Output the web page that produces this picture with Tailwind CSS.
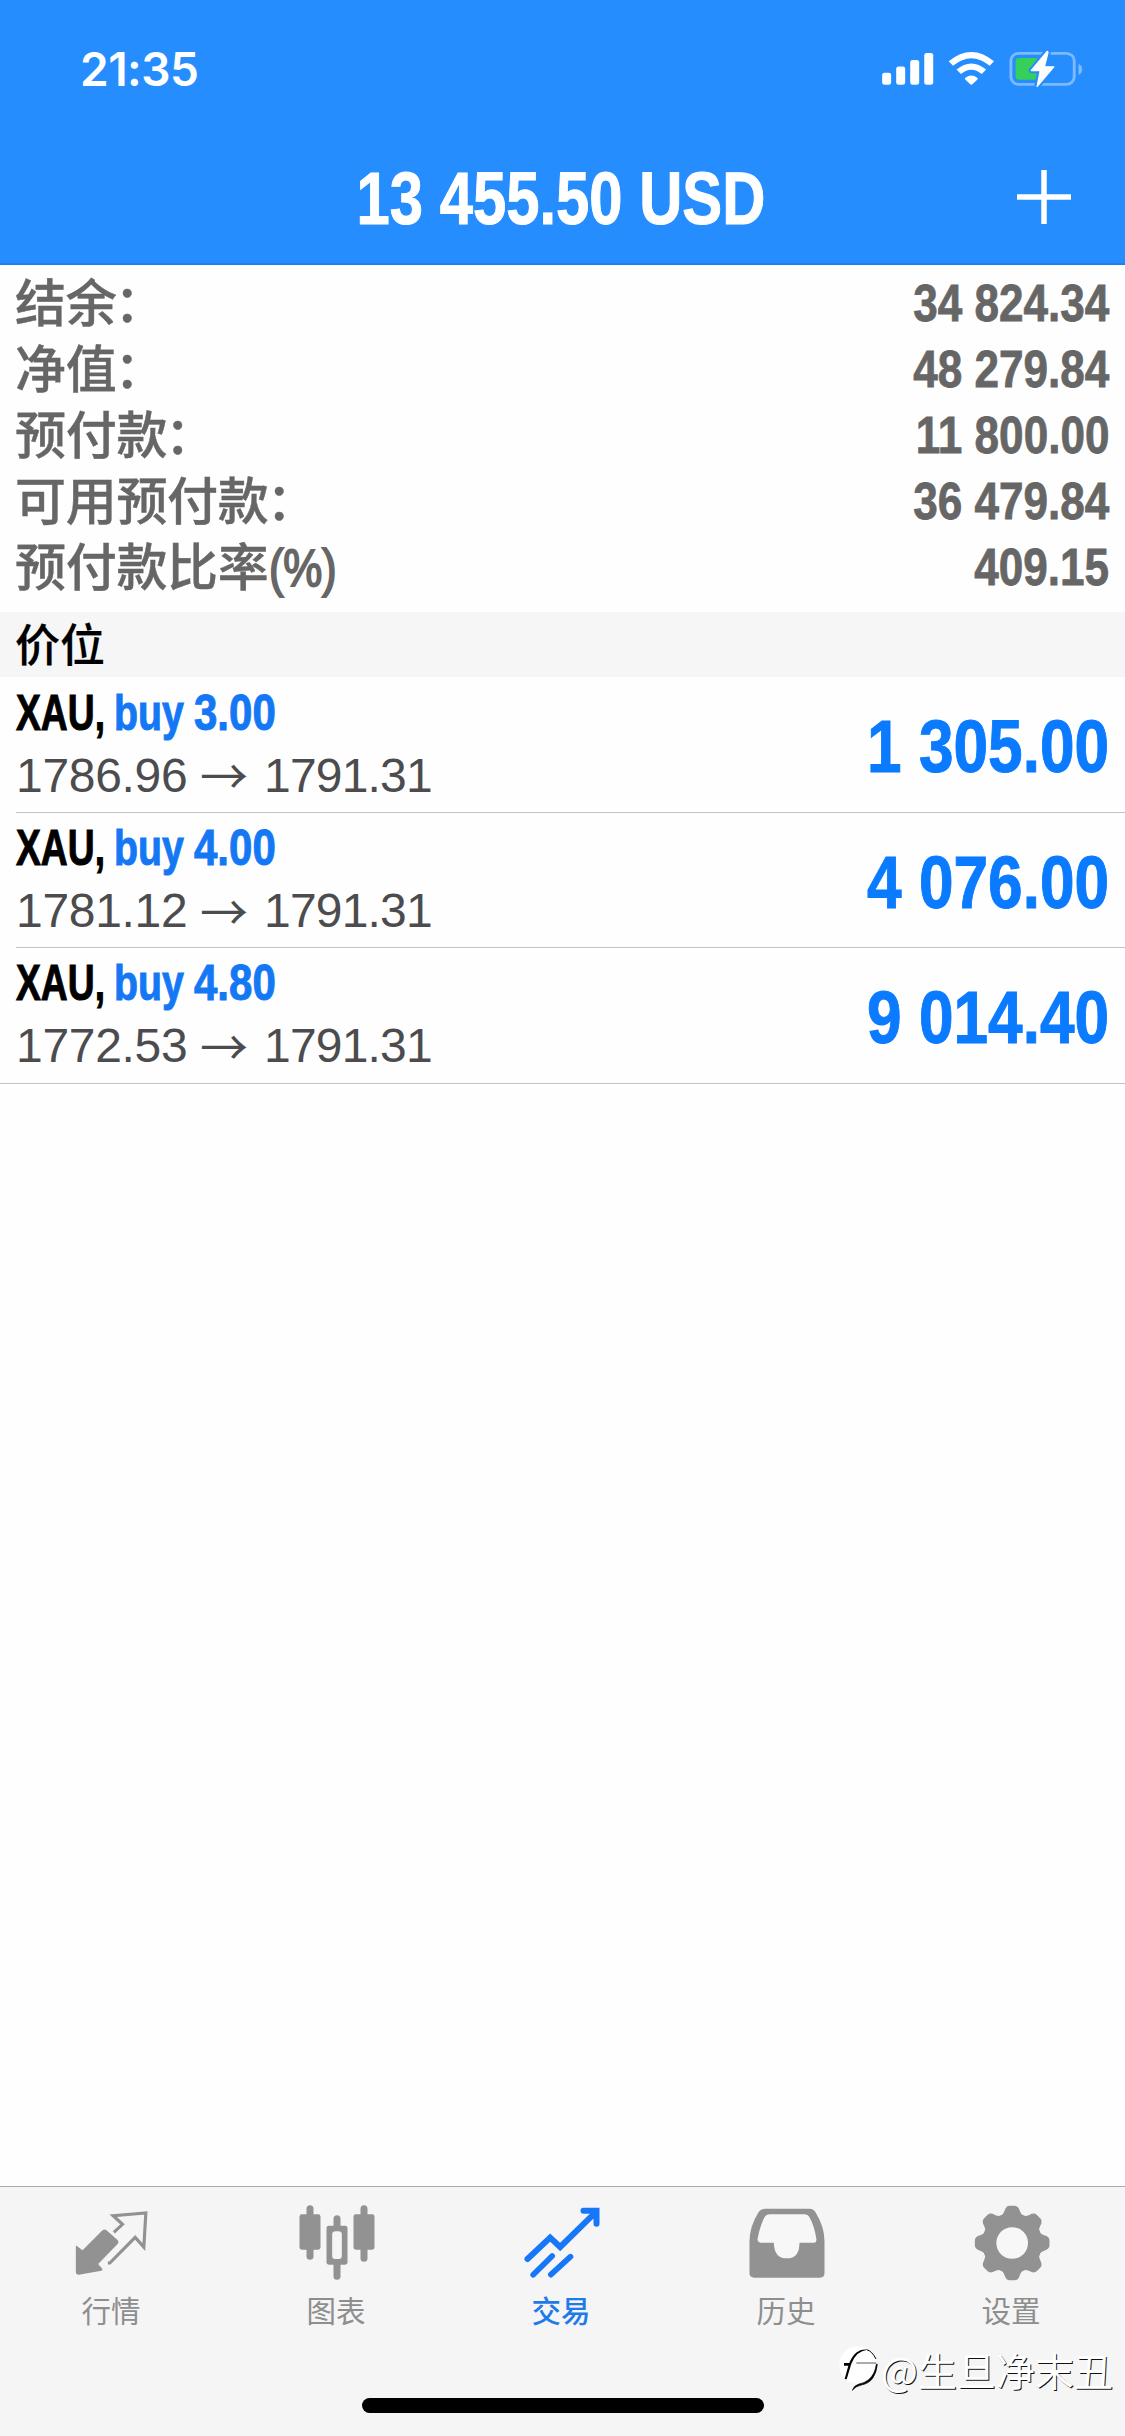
<!DOCTYPE html>
<html lang="zh-CN">
<head>
<meta charset="utf-8">
<title>交易</title>
<script src="https://cdn.jsdelivr.net/npm/@tailwindcss/browser@4"></script>
</head>
<body class="bg-white">
<div class="flex h-[2436px] w-[1125px] flex-col overflow-hidden bg-[#fefefe] font-['Liberation_Sans','Noto_Sans_CJK_SC',sans-serif]">

  <header class="h-[265px] shrink-0 border-b-2 border-[#1c80fb] bg-[#268dff] text-white">
    <div class="flex h-[132px] items-center justify-between pt-[6px] pr-[40px] pl-[80px]">
      <span class="font-['Inter',sans-serif] text-[46px] leading-none font-semibold tracking-[-0.5px]">21:35</span>
      <svg class="h-[38px] w-[205px]" viewBox="885 150 570 115" preserveAspectRatio="none">
        <g fill="#fff">
          <rect x="891" y="219" width="25" height="36" rx="7"/>
          <rect x="930" y="200" width="25" height="55" rx="7"/>
          <rect x="969" y="180" width="25" height="75" rx="7"/>
          <rect x="1008" y="159" width="25" height="96" rx="7"/>
          <path d="M1122 235Q1139 220 1156 235Q1158 237 1156 239L1142 254Q1139 257 1136 254L1122 239Q1120 237 1122 235Z"/>
        </g>
        <g fill="none" stroke="#fff" stroke-width="18">
          <path d="M1082 191Q1139 140 1196 191"/>
          <path d="M1104 216Q1139 184 1174 216"/>
        </g>
        <rect x="1249" y="160" width="176" height="94" rx="22" fill="none" stroke="#7cbaff" stroke-width="8"/>
        <path d="M1437 192Q1447 196 1447 208T1437 225Z" fill="#7cbaff"/>
        <path d="M1272 174H1322V240H1272Q1262 240 1262 230V184Q1262 174 1272 174Z" fill="#35cf5a"/>
        <path d="M1350 154L1306 212H1331L1322 260L1368 201H1342L1352 157Z" fill="#fff" stroke="#268dff" stroke-width="16" stroke-linejoin="round"/>
        <path d="M1350 154L1306 212H1331L1322 260L1368 201H1342L1352 157Z" fill="#fff" stroke="#fff" stroke-width="4" stroke-linejoin="round"/>
      </svg>
    </div>
    <div class="flex h-[131px] items-center justify-between pr-[54px] pl-[106px]">
      <div class="flex grow justify-center pt-[3px]">
        <h1 class="mx-[-60px] scale-x-[0.808] text-[74px] leading-none font-bold whitespace-nowrap [-webkit-text-stroke:1px_#fff]">13 455.50 USD</h1>
      </div>
      <svg class="mb-[2px] h-[54px] w-[54px]" viewBox="0 0 54 54" stroke="#fff" stroke-width="5.500"><path d="M0 27H54M27 0V54"/></svg>
    </div>
  </header>

  <dl class="h-[347px] shrink-0 pt-[5px] pr-[16px] pl-[15px] text-[52px] font-bold text-[#666]">
    <div class="flex h-[66px] items-center justify-between"><dt class="pt-[4px] text-[51px] leading-[62px] font-medium tracking-[-0.3px] [-webkit-text-stroke:0.4px_#666]">结余<span class="-ml-[2px]">：</span></dt><dd class="origin-right scale-x-[0.848] [-webkit-text-stroke:0.8px_#666]">34 824.34</dd></div>
    <div class="flex h-[66px] items-center justify-between"><dt class="pt-[4px] text-[51px] leading-[62px] font-medium tracking-[-0.3px] [-webkit-text-stroke:0.4px_#666]">净值<span class="-ml-[2px]">：</span></dt><dd class="origin-right scale-x-[0.848] [-webkit-text-stroke:0.8px_#666]">48 279.84</dd></div>
    <div class="flex h-[66px] items-center justify-between"><dt class="pt-[4px] text-[51px] leading-[62px] font-medium tracking-[-0.3px] [-webkit-text-stroke:0.4px_#666]">预付款<span class="-ml-[2px]">：</span></dt><dd class="origin-right scale-x-[0.848] [-webkit-text-stroke:0.8px_#666]">11 800.00</dd></div>
    <div class="flex h-[66px] items-center justify-between"><dt class="pt-[4px] text-[51px] leading-[62px] font-medium tracking-[-0.3px] [-webkit-text-stroke:0.4px_#666]">可用预付款<span class="-ml-[2px]">：</span></dt><dd class="origin-right scale-x-[0.848] [-webkit-text-stroke:0.8px_#666]">36 479.84</dd></div>
    <div class="flex h-[66px] items-center justify-between"><dt class="pt-[4px] text-[51px] leading-[62px] font-medium tracking-[-0.3px] [-webkit-text-stroke:0.4px_#666]">预付款比率<span class="inline-block origin-left scale-x-[0.86] [-webkit-text-stroke:1.8px_#666]">(%)</span></dt><dd class="origin-right scale-x-[0.848] [-webkit-text-stroke:0.8px_#666]">409.15</dd></div>
  </dl>

  <h2 class="flex h-[65px] shrink-0 items-center bg-[#f6f6f6] pt-[4px] pl-[15px] text-[45px] leading-none font-medium text-black [-webkit-text-stroke:0.2px_#000]">价位</h2>

  <ul class="shrink-0 border-b border-[#c4c4c6]">
    <li class="ml-[16px] flex h-[136px] items-center justify-between border-b border-[#c4c4c6] pr-[16px]">
      <div class="flex flex-col">
        <div class="flex h-[62px] items-center pb-[2px] text-[50px] leading-none font-bold">
          <span class="w-[98px] text-black"><span class="inline-block origin-left scale-x-[0.745] [-webkit-text-stroke:1px_#000]">XAU,</span></span>
          <span class="w-[79px] text-[#1478f5]"><span class="inline-block origin-left scale-x-[0.785] [-webkit-text-stroke:1px_#1478f5]">buy</span></span>
          <span class="w-[90px] text-[#1478f5]"><span class="ml-px inline-block origin-left scale-x-[0.84] [-webkit-text-stroke:1px_#1478f5]">3.00</span></span>
        </div>
        <div class="flex h-[62px] items-center text-[48px] leading-none whitespace-nowrap text-[#4c4c4e]"><span class="w-[184px] tracking-[-0.3px]">1786.96</span><span class="w-[64px] pb-[5px] font-['Noto_Sans_CJK_SC',sans-serif]">→</span><span class="tracking-[-0.8px]">1791.31</span></div>
      </div>
      <span class="mt-[5px] origin-right scale-x-[0.84] text-[74px] leading-none font-bold text-[#0a7aff] [-webkit-text-stroke:1px_#0a7aff]">1 305.00</span>
    </li>
    <li class="ml-[16px] flex h-[135px] items-center justify-between border-b border-[#c4c4c6] pr-[16px]">
      <div class="flex flex-col">
        <div class="flex h-[62px] items-center pb-[2px] text-[50px] leading-none font-bold">
          <span class="w-[98px] text-black"><span class="inline-block origin-left scale-x-[0.745] [-webkit-text-stroke:1px_#000]">XAU,</span></span>
          <span class="w-[79px] text-[#1478f5]"><span class="inline-block origin-left scale-x-[0.785] [-webkit-text-stroke:1px_#1478f5]">buy</span></span>
          <span class="w-[90px] text-[#1478f5]"><span class="ml-px inline-block origin-left scale-x-[0.84] [-webkit-text-stroke:1px_#1478f5]">4.00</span></span>
        </div>
        <div class="flex h-[62px] items-center text-[48px] leading-none whitespace-nowrap text-[#4c4c4e]"><span class="w-[184px] tracking-[-0.3px]">1781.12</span><span class="w-[64px] pb-[5px] font-['Noto_Sans_CJK_SC',sans-serif]">→</span><span class="tracking-[-0.8px]">1791.31</span></div>
      </div>
      <span class="mt-[5px] origin-right scale-x-[0.84] text-[74px] leading-none font-bold text-[#0a7aff] [-webkit-text-stroke:1px_#0a7aff]">4 076.00</span>
    </li>
    <li class="ml-[16px] flex h-[135px] items-center justify-between pr-[16px]">
      <div class="flex flex-col">
        <div class="flex h-[62px] items-center pb-[3px] text-[50px] leading-none font-bold">
          <span class="w-[98px] text-black"><span class="inline-block origin-left scale-x-[0.745] [-webkit-text-stroke:1px_#000]">XAU,</span></span>
          <span class="w-[79px] text-[#1478f5]"><span class="inline-block origin-left scale-x-[0.785] [-webkit-text-stroke:1px_#1478f5]">buy</span></span>
          <span class="w-[90px] text-[#1478f5]"><span class="ml-px inline-block origin-left scale-x-[0.84] [-webkit-text-stroke:1px_#1478f5]">4.80</span></span>
        </div>
        <div class="flex h-[62px] items-center pb-px text-[48px] leading-none whitespace-nowrap text-[#4c4c4e]"><span class="w-[184px] tracking-[-0.3px]">1772.53</span><span class="w-[64px] pb-[5px] font-['Noto_Sans_CJK_SC',sans-serif]">→</span><span class="tracking-[-0.8px]">1791.31</span></div>
      </div>
      <span class="mt-[4px] origin-right scale-x-[0.84] text-[74px] leading-none font-bold text-[#0a7aff] [-webkit-text-stroke:1px_#0a7aff]">9 014.40</span>
    </li>
  </ul>

  <main class="grow"></main>

  <footer class="relative h-[250px] shrink-0 border-t border-[#a9a9ab] bg-[#f5f5f5]">
    <nav class="grid h-[211px] grid-cols-5 pt-[16px] font-['Noto_Sans_CJK_SC',sans-serif] text-[29.500px] leading-[36px] text-[#8e8e8e]">
      <div class="flex flex-col items-center gap-[8px]">
        <svg class="h-[80px] w-[78px]" viewBox="220.5 100 234 240">
          <path d="M226 230Q226 227 229 229L246 242L306 182Q312 177 318 182L352 212Q356 217 352 222L293 283L305 297Q308 301 303 303L235 315Q226 315 226 307Z" fill="#929292"/>
          <path d="M340 188L366 164L338 138L436 130L430 232L404 203L328 280H322" fill="none" stroke="#929292" stroke-width="9.500"/>
        </svg>
        <span class="mr-[3px]">行情</span>
      </div>
      <div class="flex flex-col items-center gap-[8px]">
        <svg class="h-[80px] w-[78px]" viewBox="895.5 100 234 240" fill="#929292">
          <rect x="918" y="107" width="21" height="163" rx="10.500"/><rect x="897" y="134" width="63" height="106" rx="7"/>
          <rect x="999" y="137" width="21" height="193" rx="10.500"/><rect x="978" y="168" width="63" height="117" rx="7"/>
          <rect x="1080" y="107" width="21" height="169" rx="10.500"/><rect x="1059" y="134" width="63" height="106" rx="7"/>
          <rect x="995" y="185" width="29" height="83" rx="10" fill="#f5f5f5"/>
        </svg>
        <span class="mr-[3px]">图表</span>
      </div>
      <div class="flex flex-col items-center gap-[8px] font-medium text-[#1f7aea]">
        <svg class="h-[80px] w-[78px]" viewBox="370.5 100 234 240" fill="none" stroke="#1877f8" stroke-width="18" stroke-linecap="round">
          <path d="M381 268L449 204L479 232L585 128M549 123H588V162" stroke-linejoin="miter"/>
          <path d="M398 315L455 259M451 315L510 261" stroke-width="17"/>
        </svg>
        <span class="mr-[3px]">交易</span>
      </div>
      <div class="flex flex-col items-center gap-[8px]">
        <svg class="h-[80px] w-[78px]" viewBox="1045.5 100 234 240">
          <path d="M1094 117H1227Q1238 117 1244 126Q1272 170 1272 215V310Q1272 324 1258 324H1061Q1047 324 1047 310V215Q1047 170 1075 126Q1082 117 1094 117Z" fill="#929292"/>
          <path d="M1109 134H1211Q1222 134 1227 143Q1242 170 1248 210Q1248 218 1241 219H1197Q1197 266 1159 266T1120 219H1080Q1071 218 1071 209Q1078 170 1092 143Q1097 134 1109 134Z" fill="#f7f7f7"/>
        </svg>
        <span class="mr-[3px]">历史</span>
      </div>
      <div class="flex flex-col items-center gap-[8px]">
        <svg class="h-[80px] w-[78px]" viewBox="580.5 100 234 240" fill="#929292">
          <defs><path id="tooth" d="M660 140Q669 134 672 124Q676 108 688 108H702Q714 108 718 124Q721 134 730 140Z"/></defs>
          <circle cx="695" cy="220" r="90"/>
          <use href="#tooth"/><use href="#tooth" transform="rotate(45 695 220)"/><use href="#tooth" transform="rotate(90 695 220)"/><use href="#tooth" transform="rotate(135 695 220)"/><use href="#tooth" transform="rotate(180 695 220)"/><use href="#tooth" transform="rotate(225 695 220)"/><use href="#tooth" transform="rotate(270 695 220)"/><use href="#tooth" transform="rotate(315 695 220)"/>
          <circle cx="695" cy="220" r="47.500" fill="#f7f7f7"/>
        </svg>
        <span class="mr-[3px]">设置</span>
      </div>
    </nav>
    <div class="mx-auto h-[15px] w-[402px] rounded-full bg-black"></div>

    <div class="absolute top-[157px] right-[12px] flex items-center">
      <svg class="mr-px h-[50px] w-[42px]" viewBox="170 545 126 150">
        <circle cx="230" cy="608" r="56" fill="#fff"/>
        <path d="M188 610V602H204Q222 558 258 562Q224 566 210 604L196 651L190 650L201 610Z" fill="#000"/>
        <path d="M225 602H285" stroke="#333" stroke-width="2.500"/>
        <path d="M256 562Q272 566 284 590" stroke="#000" stroke-width="3" fill="none"/>
        <path d="M285 606Q281 636 262 652Q250 662 233 665Q217 670 213 684Q222 672 240 668Q262 664 274 648Q286 630 288 606Z" fill="#000" stroke="#000" stroke-width="2"/>
      </svg>
      <span class="font-['Noto_Sans_CJK_SC',sans-serif] text-[39px] leading-none whitespace-nowrap text-white [text-shadow:1px_1px_0_#111]">@生旦净末丑</span>
    </div>
  </footer>
</div>
</body>
</html>
